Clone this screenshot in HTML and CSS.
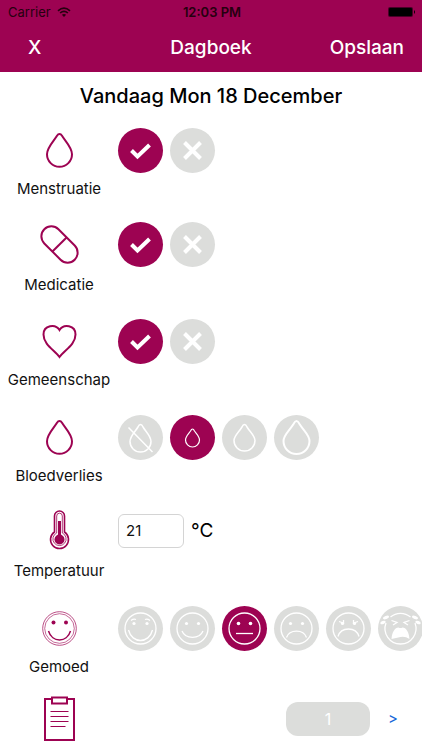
FILE: index.html
```html
<!DOCTYPE html>
<html lang="nl">
<head>
<meta charset="utf-8">
<meta name="viewport" content="width=device-width, initial-scale=1">
<title>Dagboek</title>
<link rel="stylesheet" href="styles.css">
</head>
<body>
<svg class="sprite" aria-hidden="true">
  <symbol id="drop" viewBox="0 0 45 45"><path d="M22.500 6C21.300 6 20.600 6.800 20 7.800C16.600 13.500 10 19.300 10 26.300A12.500 12.500 0 0 0 35 26.300C35 19.300 28.400 13.500 25 7.800C24.400 6.800 23.700 6 22.500 6Z"/></symbol>
  <symbol id="check" viewBox="0 0 45 45"><path d="M13.500 22.500l6 6L31.500 17" stroke-width="4"/></symbol>
  <symbol id="cross" viewBox="0 0 45 45"><path d="M14.500 14.500l16 16M30.500 14.500l-16 16" stroke-width="4"/></symbol>
</svg>

<header class="top">
  <div class="status">
    <span class="carrier">Carrier
      <svg class="wifi" viewBox="0 0 14 10" aria-hidden="true"><path d="M1 3.800Q7-1.500 13 3.800M3.100 6Q7 2.600 10.900 6" fill="none" stroke="currentColor" stroke-width="1.600"/><path d="M4.900 7.800Q7 6 9.100 7.800L7 10Z" fill="currentColor"/></svg>
    </span>
    <span class="clock">12:03 PM</span>
    <svg class="battery" viewBox="0 0 28 10" aria-hidden="true"><rect x="0" y="0" width="25" height="10" rx="2" fill="#4a0028"/><rect x="1" y="1" width="23" height="8" rx="1"/><path d="M26 3q2 2 0 4z"/></svg>
  </div>
  <nav class="bar">
    <button class="bar-button close" type="button" aria-label="Sluiten">X</button>
    <h1>Dagboek</h1>
    <button class="bar-button save" type="button">Opslaan</button>
  </nav>
</header>

<main>
  <h2>Vandaag Mon 18 December</h2>
  <form class="entries">
    <fieldset class="entry">
      <div class="topic">
        <svg class="icon" aria-hidden="true"><use href="#drop"/></svg>
        <span id="menstruatie">Menstruatie</span>
      </div>
      <div class="choices" role="radiogroup" aria-labelledby="menstruatie">
        <label class="choice"><input type="radio" name="menstruatie" aria-label="Ja" checked><svg><use href="#check"/></svg></label>
        <label class="choice"><input type="radio" name="menstruatie" aria-label="Nee"><svg><use href="#cross"/></svg></label>
      </div>
    </fieldset>

    <fieldset class="entry raised">
      <div class="topic">
        <svg class="icon" viewBox="0 0 45 45" aria-hidden="true"><g transform="rotate(45 22.500 22.500)"><rect x="1" y="12.500" width="43" height="20" rx="10"/><path d="M22.500 12.500v20"/></g></svg>
        <span id="medicatie">Medicatie</span>
      </div>
      <div class="choices" role="radiogroup" aria-labelledby="medicatie">
        <label class="choice"><input type="radio" name="medicatie" aria-label="Ja" checked><svg><use href="#check"/></svg></label>
        <label class="choice"><input type="radio" name="medicatie" aria-label="Nee"><svg><use href="#cross"/></svg></label>
      </div>
    </fieldset>

    <fieldset class="entry">
      <div class="topic">
        <svg class="icon" viewBox="0 0 45 45" aria-hidden="true"><path d="M22.500 38C18 31.500 6.500 26 6.500 15.500C6.500 6 18.500 4.500 22.500 11C26.500 4.500 38.500 6 38.500 15.500C38.500 26 27 31.500 22.500 38Z"/></svg>
        <span id="gemeenschap">Gemeenschap</span>
      </div>
      <div class="choices" role="radiogroup" aria-labelledby="gemeenschap">
        <label class="choice"><input type="radio" name="gemeenschap" aria-label="Ja" checked><svg><use href="#check"/></svg></label>
        <label class="choice"><input type="radio" name="gemeenschap" aria-label="Nee"><svg><use href="#cross"/></svg></label>
      </div>
    </fieldset>

    <fieldset class="entry">
      <div class="topic">
        <svg class="icon" aria-hidden="true"><use href="#drop"/></svg>
        <span id="bloedverlies">Bloedverlies</span>
      </div>
      <div class="choices" role="radiogroup" aria-labelledby="bloedverlies">
        <label class="choice"><input type="radio" name="bloedverlies" aria-label="Geen"><svg viewBox="0 0 45 45"><path d="M22.500 9.500Q21 9.500 20 12C17 17 12 21 12 26.500A10.500 10.500 0 0 0 33 26.500C33 21 28 17 25 12Q24 9.500 22.500 9.500ZM10.500 12.500L34.500 37"/></svg></label>
        <label class="choice"><input type="radio" name="bloedverlies" aria-label="Licht" checked><svg viewBox="0 0 45 45"><path d="M22.500 14Q21.500 14 20.500 16C18.500 19 15.500 21.500 15.500 25A7 7 0 0 0 29.500 25C29.500 21.500 26.500 19 24.500 16Q23.500 14 22.500 14Z" stroke-width="1.200"/></svg></label>
        <label class="choice"><input type="radio" name="bloedverlies" aria-label="Gemiddeld"><svg viewBox="0 0 45 45"><path d="M22.500 9.500Q21 9.500 20 12C17 17 12 21 12 25.500A10.500 10.500 0 0 0 33 25.500C33 21 28 17 25 12Q24 9.500 22.500 9.500Z"/></svg></label>
        <label class="choice"><input type="radio" name="bloedverlies" aria-label="Hevig"><svg viewBox="0 0 45 45"><path d="M22.500 6Q21 6 19.500 9C16 15 9.500 20 9.500 26A13 13 0 0 0 35.500 26C35.500 20 29 15 25.500 9Q24 6 22.500 6Z" stroke-width="2"/></svg></label>
      </div>
    </fieldset>

    <div class="entry raised">
      <div class="topic">
        <svg class="icon" viewBox="0 0 45 45" aria-hidden="true"><path d="M17.500 24V8a5 5 0 0 1 10 0V24a9 9 0 1 1-10 0Z" stroke-width="1.600"/><path d="M19.700 25V8a2.800 2.800 0 0 1 5.600 0V25a6.600 6.600 0 1 1-5.600 0Z" stroke-width=".8"/><path d="M22.500 13v18" stroke-width="3"/><circle cx="22.500" cy="31.500" r="5" fill="#9d0352" stroke="none"/></svg>
        <label for="temperatuur">Temperatuur</label>
      </div>
      <div class="measure">
        <input id="temperatuur" class="number" type="text" inputmode="decimal" value="21">
        <span>°C</span>
      </div>
    </div>

    <fieldset class="entry">
      <div class="topic">
        <svg class="icon" viewBox="0 0 45 45" aria-hidden="true"><circle cx="22.500" cy="22.500" r="16.800" stroke-width=".7"/><circle cx="22.500" cy="22.500" r="14.800" stroke-width=".6"/><path d="M11.500 25c3.500 12 18.500 12 22 0" stroke-width="1.500"/><g fill="#9d0352" stroke="none"><circle cx="16.500" cy="16.500" r="2"/><circle cx="29" cy="16.500" r="2"/></g></svg>
        <span id="gemoed">Gemoed</span>
      </div>
      <div class="choices faces" role="radiogroup" aria-labelledby="gemoed">
        <label class="choice"><input type="radio" name="gemoed" aria-label="Heel blij"><svg viewBox="0 0 45 45"><circle cx="22.500" cy="22.500" r="15.500"/><path d="M10.500 24c3.500 14 20.500 14 24 0M13 14.500q2.500-2 5-1M27 13.500q2.500-1 5 1"/><g class="eyes"><circle cx="16" cy="17.500" r="1.600"/><circle cx="29" cy="17.500" r="1.600"/></g></svg></label>
        <label class="choice"><input type="radio" name="gemoed" aria-label="Blij"><svg viewBox="0 0 45 45"><circle cx="22.500" cy="22.500" r="15.500"/><path d="M12 25c3.500 8.500 17.500 8.500 21 0"/><g class="eyes"><circle cx="16.500" cy="17.500" r="1.600"/><circle cx="28.500" cy="17.500" r="1.600"/></g></svg></label>
        <label class="choice"><input type="radio" name="gemoed" aria-label="Neutraal" checked><svg viewBox="0 0 45 45"><circle cx="22.500" cy="22.500" r="15.500"/><path d="M14 27.500h17"/><g class="eyes"><circle cx="16.500" cy="17.500" r="1.800"/><circle cx="28.500" cy="17.500" r="1.800"/></g></svg></label>
        <label class="choice"><input type="radio" name="gemoed" aria-label="Verdrietig"><svg viewBox="0 0 45 45"><circle cx="22.500" cy="22.500" r="15.500"/><path d="M12.500 31.500c3-8.500 17-8.500 20 0"/><g class="eyes"><circle cx="16.500" cy="17.500" r="1.600"/><circle cx="28.500" cy="17.500" r="1.600"/></g></svg></label>
        <label class="choice"><input type="radio" name="gemoed" aria-label="Boos"><svg viewBox="0 0 45 45"><circle cx="22.500" cy="22.500" r="15.500"/><path d="M12 30.500c3-10 18-10 21 0M13 15.500l4.500 1.500v-3M32 15.500l-4.500 1.500v-3"/><g class="eyes"><circle cx="16.500" cy="17.500" r="1.600"/><circle cx="28.500" cy="17.500" r="1.600"/></g></svg></label>
        <label class="choice"><input type="radio" name="gemoed" aria-label="Huilend"><svg viewBox="0 0 45 45"><path d="M12.500 11a15.500 15.500 0 0 1 20 0M8 17a15.500 15.500 0 1 0 29 0M13.500 14.500l5.500 2-4 2.500M31.500 14.500l-5.500 2 4 2.500"/><path class="solid" d="M13.500 33C14 26 17 21.500 20.500 21.500Q22.500 22.500 24.500 21.500C28 21.500 31 26 31.500 33Q27 30 22.500 31T13.500 33Z"/><g class="eyes"><ellipse cx="8" cy="11.500" rx="3.200" ry="1.500" transform="rotate(-20 8 11.500)"/><ellipse cx="5" cy="16.500" rx="2.800" ry="1.500" transform="rotate(-20 5 16.500)"/><ellipse cx="37" cy="11.500" rx="3.200" ry="1.500" transform="rotate(20 37 11.500)"/><ellipse cx="40" cy="16.500" rx="2.800" ry="1.500" transform="rotate(20 40 16.500)"/></g></svg></label>
      </div>
    </fieldset>

    <div class="entry notes">
      <div class="topic">
        <svg class="icon" viewBox="0 0 45 45" aria-hidden="true"><path d="M15 3H8v41h29V3h-7"/><path d="M15 1.500h15v6H15Z"/><path d="M13.500 15.500h18M13.500 20.500h18M13.500 25.500h18M13.500 30.500h15" stroke-width="1.200"/></svg>
      </div>
      <div class="paging">
        <button class="count" type="button">1</button>
        <a class="next" href="#notities" aria-label="Volgende">&gt;</a>
      </div>
    </div>
  </form>
</main>
</body>
</html>
```
FILE: styles.css
```css
:root {
  --brand: #9d0352;
  --muted: #dcdddb;
}

* { box-sizing: border-box; }

body {
  margin: 0;
  background: #fff;
  color: #111;
  font: 15px/20px Inter, "Liberation Sans", sans-serif;
  overflow-x: hidden;
}

.sprite {
  position: absolute;
  width: 0;
  height: 0;
}

button, input {
  margin: 0;
  font: inherit;
}

/* Header */
.top {
  background: var(--brand);
}

.status {
  display: grid;
  grid-template-columns: 1fr auto 1fr;
  align-items: center;
  height: 24px;
  padding: 0 6px 0 8px;
  color: #26000f;
  font-size: 13px;
}

.carrier {
  display: flex;
  align-items: center;
  gap: 6px;
}

.wifi {
  width: 14px;
  height: 10px;
}

.clock { font-weight: 600; }

.battery {
  width: 28px;
  height: 10px;
  justify-self: end;
}

.bar {
  display: grid;
  grid-template-columns: 1fr auto 1fr;
  align-items: center;
  height: 48px;
  padding: 0 18px;
  color: #fff;
}

.bar h1,
.bar-button {
  font-size: 19px;
  font-weight: 500;
}

.bar h1 { margin: 0; }

.bar-button {
  padding: 0;
  border: 0;
  background: none;
  color: inherit;
}

.close {
  justify-self: start;
  padding: 0 10px;
}

.save { justify-self: end; }

h2 {
  margin: 0;
  padding: 12px 0 14px;
  color: #000;
  font-size: 20px;
  font-weight: 500;
  line-height: 24px;
  text-align: center;
}

/* Diary entries */
.entry {
  display: grid;
  grid-template-columns: 118px minmax(0, 1fr);
  align-items: start;
  height: 96px;
  min-width: 0;
  margin: 0;
  padding: 6px 0 0;
  border: 0;
}

.entry:nth-child(even) { height: 95px; }

.entry.raised { padding-top: 4px; }

.entry.raised .topic { gap: 8px; }

.entry.notes {
  height: auto;
  padding-top: 1px;
}

.topic {
  display: flex;
  flex-direction: column;
  align-items: center;
  gap: 6px;
}

.icon {
  width: 45px;
  height: 45px;
  fill: none;
  stroke: var(--brand);
  stroke-width: 2;
}

.choices {
  display: flex;
  gap: 7px;
}

.choice {
  display: grid;
  flex: none;
  cursor: pointer;
}

.choice input,
.choice svg {
  grid-area: 1 / 1;
  width: 45px;
  height: 45px;
}

.choice input {
  appearance: none;
  border-radius: 50%;
  background: var(--muted);
}

.choice input:checked { background: var(--brand); }

.choice svg {
  z-index: 1;
  fill: none;
  stroke: #fff;
  stroke-width: 1.5;
  pointer-events: none;
}

.faces svg { stroke-width: 1.3; }

.choice .eyes,
.choice .solid {
  fill: #fff;
  stroke: none;
}

.measure {
  display: flex;
  align-items: center;
  gap: 7px;
  height: 45px;
  color: #000;
  font-size: 19px;
}

.number {
  width: 66px;
  height: 34px;
  padding: 0 7px;
  border: 1px solid #d4d4d4;
  border-radius: 6px;
  background: #fff;
  color: #111;
  font-size: 15px;
}

.paging {
  display: flex;
  align-items: center;
  justify-content: flex-end;
  gap: 18px;
  height: 45px;
  padding-right: 24px;
}

.count {
  width: 84px;
  height: 34px;
  padding: 0;
  border: 0;
  border-radius: 12px;
  background: var(--muted);
  color: #fff;
  font-size: 16px;
}

.next {
  color: #1466d8;
  text-decoration: none;
}
```
